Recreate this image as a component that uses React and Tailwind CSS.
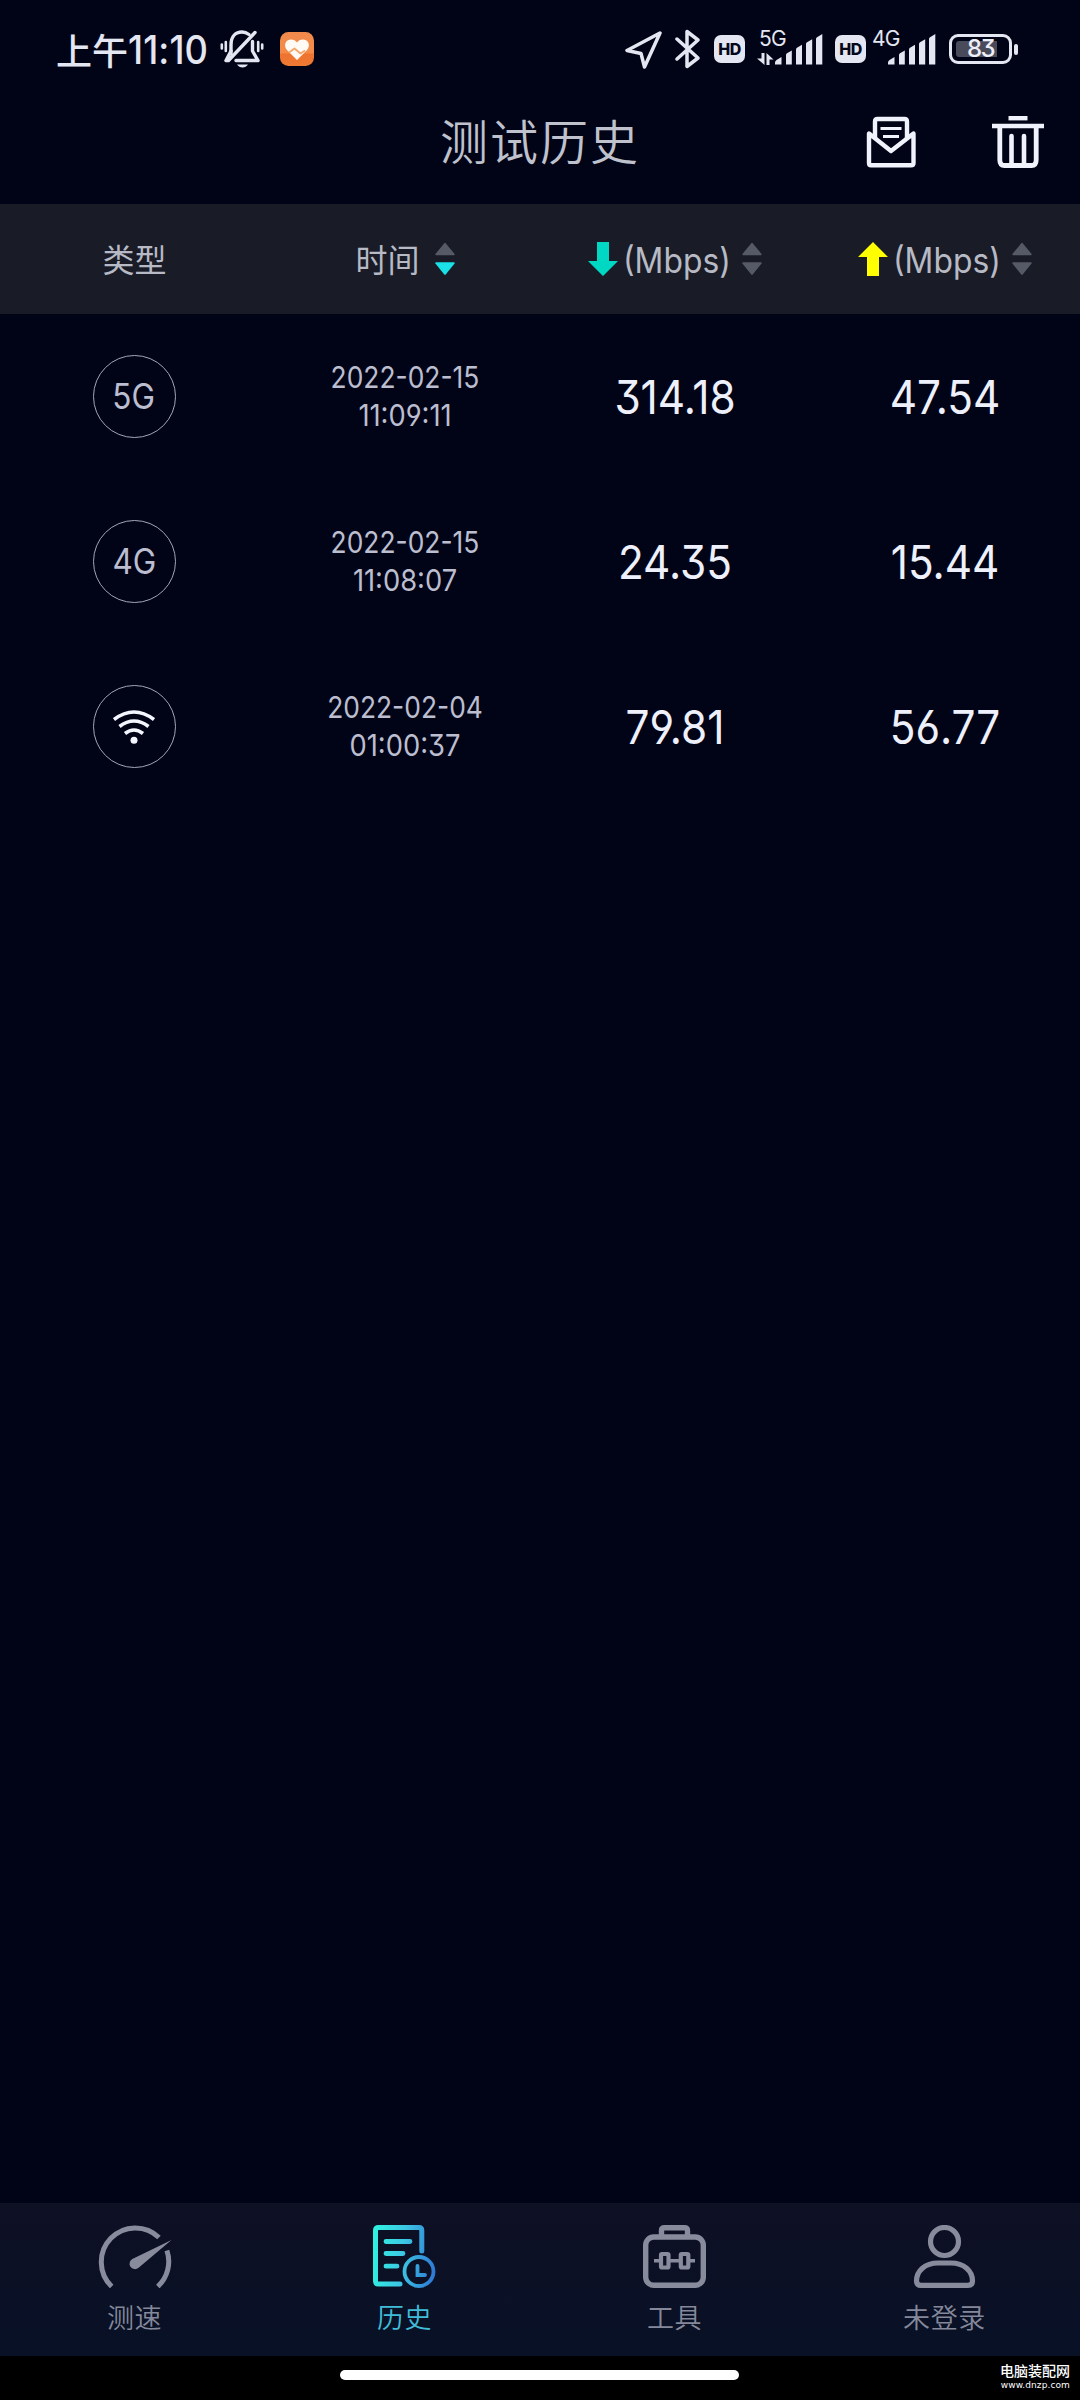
import React from "react";

const LATIN = "font-['Inter','Noto_Sans_CJK_SC',sans-serif]";

function MutedBell() {
  return (
    <svg width="44" height="40" viewBox="0 0 44 40" fill="none" stroke="#e4e6f2" strokeWidth="3.4" strokeLinecap="round" strokeLinejoin="round">
      <path d="M11 25V16C11 7 16 3 22 3C25 3 27 4 29 5.500" />
      <path d="M32.500 12.500V22L38 31.500H16" />
      <path d="M11 22L6 31.500H8.500L35 3.500" />
      <path d="M1.800 15.500V19.500M5.800 13V22M38.200 13V22M42.200 15.500V19.500" strokeWidth="2.600" />
      <path d="M17 35.500H28Q26 38.500 22.500 38.500Q19 38.500 17 35.500Z" fill="#e4e6f2" stroke="none" />
    </svg>
  );
}

function HealthApp() {
  return (
    <svg width="34" height="34" viewBox="0 0 34 34">
      <defs>
        <linearGradient id="health" x1="0" y1="0" x2="0" y2="1">
          <stop offset="0" stopColor="#f08a4c" />
          <stop offset="0.600" stopColor="#f58a48" />
          <stop offset="0.660" stopColor="#ee7330" />
          <stop offset="1" stopColor="#ef7a33" />
        </linearGradient>
      </defs>
      <rect width="34" height="34" rx="8.500" fill="url(#health)" />
      <path d="M17 28L7 18C3.500 14 5 8 10.500 7.500C13.500 7.300 15.500 8.500 17 10.500C18.500 8.500 20.500 7.300 23.500 7.500C29 8 30.500 14 27 18Z" fill="#fffaf4" />
      <path d="M9 20.500L14.500 16.500L20.500 21.500L25 18.500" fill="none" stroke="#f5a66c" strokeWidth="1.800" strokeLinejoin="round" />
    </svg>
  );
}

function LocationArrow() {
  return (
    <svg width="37" height="38" viewBox="0 0 37 38" fill="none" stroke="#e4e6f2" strokeWidth="3.500" strokeLinejoin="round">
      <path d="M35 2L2 19.500L16 22.500L19.500 36Z" />
    </svg>
  );
}

function Bluetooth() {
  return (
    <svg width="25" height="40" viewBox="0 0 25 40" fill="none" stroke="#e4e6f2" strokeWidth="3.500" strokeLinejoin="round" strokeLinecap="round">
      <path d="M2 10L23 29L12 37.500V2.500L23 11L2 30" />
    </svg>
  );
}

function HdBadge() {
  return (
    <div className="flex h-[28px] w-[31px] items-center justify-center rounded-[7px] bg-[#e4e6f2] text-[16px] leading-none font-extrabold tracking-[-0.5px] text-[#05071a]">
      HD
    </div>
  );
}

function SignalBars() {
  return (
    <svg width="48" height="31" viewBox="0 0 48 31" fill="#e4e6f2">
      <path d="M0 30.500V28.500Q0 27 1.500 26L6.500 23V30.500Z" />
      <path d="M11 30.500V21Q11 20 12 19.300L16.800 16.500V30.500Z" />
      <path d="M21 30.500V15.500Q21 14.500 22 13.800L27 10.800V30.500Z" />
      <path d="M31 30.500V10Q31 9 32 8.300L37.200 5.300V30.500Z" />
      <path d="M41 30.500V5Q41 4 42 3.300L47.300 0V30.500Z" />
    </svg>
  );
}

function DataArrows() {
  return (
    <svg width="17" height="12" viewBox="0 0 17 12" fill="#e4e6f2">
      <path d="M4.500 0H7.500V12L0 5.500H4.500Z" />
      <path d="M9.500 0L16.500 6.500H12.500V12H9.500Z" />
    </svg>
  );
}

function Battery() {
  return (
    <div className="flex items-center gap-[2px]">
      <div className="flex h-[30px] w-[63px] rounded-[9px] border-[3px] border-[#e4e6f2] p-[4px]">
        <div className="flex h-full w-[41px] items-center justify-end rounded-l-[3px] bg-[#4a4b5a] text-[24px] leading-none font-medium tracking-[-1.6px] text-[#eceef8]">
          <span className="pr-[3px]">83</span>
        </div>
      </div>
      <div className="h-[11px] w-[4px] rounded-[2px] bg-[#e4e6f2]" />
    </div>
  );
}

function StatusBar() {
  return (
    <div className="flex h-[98px] items-center pl-[56px] text-[#e4e6f2]">
      <div className="flex w-[164px] items-center">
        <span className="font-['Noto_Sans_CJK_SC',sans-serif] text-[36px] leading-none font-medium">上午</span>
        <span className="origin-left scale-x-93 text-[39px] leading-none font-medium tracking-[0.1px]">11:10</span>
      </div>
      <MutedBell />
      <div className="ml-[16px]"><HealthApp /></div>
      <div className="mt-[2px] ml-[311px]"><LocationArrow /></div>
      <div className="ml-[13px]"><Bluetooth /></div>
      <div className="ml-[14px]"><HdBadge /></div>
      <div className="relative ml-[12px] flex h-[31px] w-[66px] items-end justify-between">
        <DataArrows />
        <SignalBars />
        <span className="absolute top-[-8px] left-[2px] text-[21px] leading-[26px] tracking-[-0.8px]">5G</span>
      </div>
      <div className="ml-[12px]"><HdBadge /></div>
      <div className="relative ml-[6px] flex h-[31px] w-[64px] items-end justify-end">
        <SignalBars />
        <span className="absolute top-[-8px] left-0 text-[21px] leading-[26px] tracking-[-0.8px]">4G</span>
      </div>
      <div className="ml-[13px]"><Battery /></div>
    </div>
  );
}

function MailIcon() {
  return (
    <svg width="50" height="52" viewBox="0 0 50 52" fill="none" stroke="#f0f2fc" strokeWidth="4.400" strokeLinejoin="round">
      <path d="M9 22V5.500Q9 3 11.500 3H38.500Q41 3 41 5.500V22" />
      <path d="M3 17.500V47Q3 49.300 5 49.300H45Q47.500 49.300 47.500 47V17.500L25 35Z" />
      <path d="M14.500 12.500H35.500M17 20.500H33" strokeWidth="3.200" />
    </svg>
  );
}

function TrashIcon() {
  return (
    <svg width="52" height="52" viewBox="0 0 52 52" fill="none" stroke="#f0f2fc">
      <path d="M16.500 2.200H35.500" strokeWidth="4.400" />
      <path d="M0 10H52" strokeWidth="4.600" />
      <path d="M7.800 11V44Q7.800 49.500 12.500 49.500H39.500Q44.200 49.500 44.200 44V11" strokeWidth="4.800" />
      <path d="M19.500 49V20M32 49V20" strokeWidth="4.600" strokeLinecap="round" />
    </svg>
  );
}

function Sort({ down = "#555a66" }) {
  return (
    <svg width="20" height="34" viewBox="0 0 20 34">
      <path d="M9.500 1Q10 .5 10.500 1L19.600 12Q20 13.300 18.800 13.300H1.200Q0 13.300.4 12Z" fill="#555a66" />
      <path d="M1.200 20.200H18.800Q20 20.200 19.600 21.500L10.700 32.500Q10 33.300 9.300 32.500L.4 21.500Q0 20.200 1.200 20.200Z" fill={down} />
    </svg>
  );
}

function SpeedHeading({ up }) {
  return (
    <div className="flex items-center justify-center">
      <svg width="30" height="34" viewBox="0 0 30 34">
        {up ? (
          <path d="M15 0L30 15H21V34H9V15H0Z" fill="#ffff00" />
        ) : (
          <path d="M9 0H21V19H30L15 34L0 19H9Z" fill="#00d8c4" />
        )}
      </svg>
      <span className="ml-[5px] w-[103px] origin-left scale-x-91 pt-[2px] text-[35px] leading-none whitespace-nowrap">(Mbps)</span>
      <div className="ml-[16px]"><Sort /></div>
    </div>
  );
}

function WifiIcon() {
  return (
    <svg width="42" height="34" viewBox="0 0 42 34" fill="none" stroke="#f4f6ff" strokeWidth="3.600">
      <path d="M1 9.500Q21-5.500 41 9.500" />
      <path d="M6.500 16.500Q21 5.500 35.500 16.500" />
      <path d="M12 23.500Q21 16.500 30 23.500" />
      <circle cx="21" cy="30.300" r="3.500" fill="#f4f6ff" stroke="none" />
    </svg>
  );
}

const rows = [
  { type: "5G", date: "2022-02-15", time: "11:09:11", down: "314.18", up: "47.54" },
  { type: "4G", date: "2022-02-15", time: "11:08:07", down: "24.35", up: "15.44" },
  { type: "wifi", date: "2022-02-04", time: "01:00:37", down: "79.81", up: "56.77" },
];

function HistoryRow({ row }) {
  return (
    <div className="grid h-[165px] grid-cols-4 items-center text-center">
      <div className="flex justify-center pr-[2px]">
        <div className="flex size-[83px] items-center justify-center rounded-full border border-[#a4a6b8] text-[35px] leading-none text-[#bcbed0]">
          {row.type === "wifi" ? <WifiIcon /> : <span className="scale-x-90">{row.type}</span>}
        </div>
      </div>
      <div className="pb-[2px] text-[30px] leading-[38px] text-[#bcbed0]">
        <div className="scale-x-88">{row.date}</div>
        <div className="scale-x-91">{row.time}</div>
      </div>
      <div className="scale-x-90 text-[47px] leading-none text-[#eef0fc]">{row.down}</div>
      <div className="scale-x-90 text-[47px] leading-none text-[#eef0fc]">{row.up}</div>
    </div>
  );
}

function GaugeIcon() {
  return (
    <svg width="74" height="63" viewBox="0 0 74 63" fill="none" stroke="#888b9c" strokeWidth="5">
      <path d="M13.700 61.500A34 34 0 1 1 61 12.500" />
      <path d="M68.900 25.500A34 34 0 0 1 59.800 61.500" />
      <path d="M73.500 15L40.300 43.100A5.500 5.500 0 1 1 34.300 33.900Z" fill="#888b9c" stroke="none" />
    </svg>
  );
}

function HistoryIcon() {
  return (
    <svg width="63" height="63" viewBox="0 0 63 63" fill="none" stroke="url(#hist)" strokeWidth="5" strokeLinecap="round">
      <defs>
        <linearGradient id="hist" gradientUnits="userSpaceOnUse" x1="0" y1="30" x2="63" y2="38">
          <stop offset="0" stopColor="#2ff0e0" />
          <stop offset="0.450" stopColor="#3cc8e4" />
          <stop offset="1" stopColor="#2f78d4" />
        </linearGradient>
      </defs>
      <path d="M48.800 26V5.500Q48.800 2.500 45.800 2.500H5.500Q2.500 2.500 2.500 5.500V56Q2.500 59 5.500 59H27" />
      <path d="M13 16.500H37M13 28.500H30M13 41.200H24" strokeWidth="4.800" />
      <circle cx="46" cy="46.500" r="14.500" strokeWidth="3.800" />
      <path d="M44.500 41V50H52" strokeWidth="3.800" />
    </svg>
  );
}

function ToolIcon() {
  return (
    <svg width="63" height="63" viewBox="0 0 63 63" fill="none" stroke="#888b9c" strokeWidth="5.400">
      <rect x="2.700" y="12" width="57.600" height="48.300" rx="8" />
      <path d="M18.500 11V5.500Q18.500 2.700 21.500 2.700H41.500Q44.500 2.700 44.500 5.500V11" />
      <path d="M11 35.800H17M26 35.800H37M46 35.800H52" strokeWidth="3.400" />
      <rect x="18" y="29" width="7.500" height="13.500" rx="1" strokeWidth="4.200" />
      <rect x="37.800" y="29" width="7.500" height="13.500" rx="1" strokeWidth="4.200" />
    </svg>
  );
}

function UserIcon() {
  return (
    <svg width="63" height="63" viewBox="0 0 63 63" fill="none" stroke="#888b9c" strokeWidth="5.200">
      <circle cx="31.500" cy="16.500" r="14" />
      <path d="M25 38H38C51 38 59.500 46 59.500 56Q59.500 60.400 55 60.400H8Q3.500 60.400 3.500 56C3.500 46 12 38 25 38Z" />
    </svg>
  );
}

const tabs = [
  { label: "测速", icon: <GaugeIcon /> },
  { label: "历史", icon: <HistoryIcon />, active: true },
  { label: "工具", icon: <ToolIcon /> },
  { label: "未登录", icon: <UserIcon /> },
];

export default function App() {
  return (
    <div className={"flex h-[2400px] w-[1080px] flex-col overflow-hidden bg-[#010416] [font-feature-settings:'cv03','cv04','cv09'] " + LATIN}>
      <StatusBar />
      <header className="grid h-[106px] grid-cols-[1fr_auto_1fr] items-start">
        <span />
        <h1 className="mt-[16px] font-['Noto_Sans_CJK_SC',sans-serif] text-[48px] leading-[50px] font-[350] tracking-[2px] text-[#bfc1cc]">测试历史</h1>
        <div className="mt-[18px] flex justify-end gap-[76px] pr-[36px]">
          <MailIcon />
          <TrashIcon />
        </div>
      </header>
      <div className="grid h-[110px] grid-cols-4 items-center bg-[#191c27] text-[32px] leading-none text-[#b7bac4]">
        <div className="pt-[3px] pr-[1px] text-center">类型</div>
        <div className="flex items-center justify-center">
          <span className="pt-[3px]">时间</span>
          <div className="ml-[15px]"><Sort down="#1ae0e8" /></div>
        </div>
        <SpeedHeading />
        <SpeedHeading up />
      </div>
      <main className="flex-1">
        {rows.map((row) => (
          <HistoryRow key={row.time} row={row} />
        ))}
      </main>
      <nav className="grid h-[153px] grid-cols-4 bg-linear-to-b from-[#0e1024] to-[#081126]">
        {tabs.map((t) => (
          <div key={t.label} className="flex flex-col items-center pt-[22px] pr-[1px]">
            {t.icon}
            <span className={"mt-[14px] font-['Noto_Sans_CJK_SC',sans-serif] text-[27px] leading-[30px] font-[350] tracking-[0.6px] " + (t.active ? "text-[#40bcd8]" : "text-[#85889a]")}>{t.label}</span>
          </div>
        ))}
      </nav>
      <footer className="grid h-[44px] grid-cols-[340px_399px_1fr] bg-black">
        <span />
        <div className="mt-[14px] h-[10px] rounded-full bg-white" />
        <div className="flex flex-col items-end pt-[7px] pr-[10px] text-white">
          <span className="font-['Noto_Sans_CJK_SC',sans-serif] text-[14px] leading-[15px] font-medium">电脑装配网</span>
          <span className="mt-[1px] font-['DejaVu_Sans',sans-serif] text-[9px] leading-[12px] tracking-[0.1px]">www.dnzp.com</span>
        </div>
      </footer>
    </div>
  );
}
